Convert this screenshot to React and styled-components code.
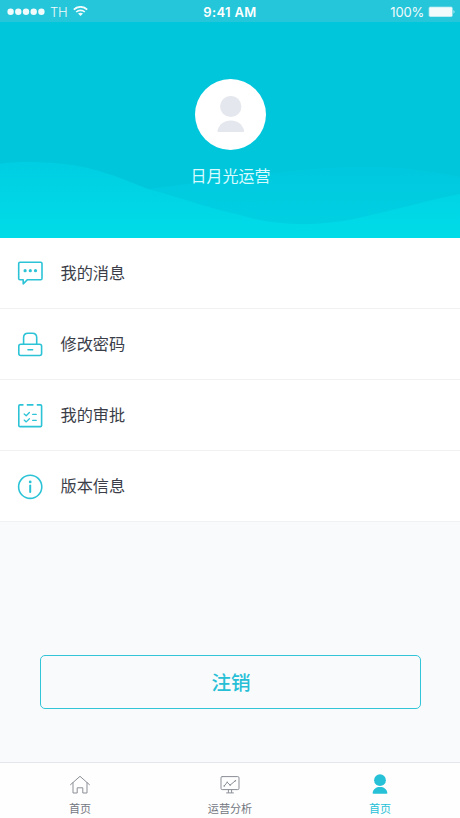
import React from 'react';
import styled, { createGlobalStyle } from 'styled-components';

const GlobalStyle = createGlobalStyle`
  * { box-sizing: border-box; }
  body {
    margin: 0;
    font-family: 'Noto Sans CJK SC', sans-serif;
    background: #f9fafc;
  }
`;

const Screen = styled.div`
  display: flex;
  flex-direction: column;
  width: 460px;
  height: 818px;
  overflow: hidden;
  background: #f9fafc;
`;

const StatusBar = styled.div`
  display: grid;
  grid-template-columns: 1fr auto 1fr;
  align-items: start;
  flex: none;
  height: 22px;
  padding: 2px 5px 0 7px;
  background: #26c6da;
  color: #fff;
  font: 13px/20px Inter, sans-serif;
`;

const StatusSide = styled.div`
  display: flex;
  align-items: center;
  justify-content: ${(p) => (p.$end ? 'flex-end' : 'flex-start')};
  height: 20px;
  gap: ${(p) => (p.$end ? '4px' : '5px')};
  opacity: 0.94;
`;

const Carrier = styled.span`
  font-weight: 300;
  letter-spacing: -0.2px;
`;

const Percent = styled.span`
  letter-spacing: -0.2px;
`;

const Clock = styled.span`
  font-size: 13px;
  font-weight: 600;
  letter-spacing: 0.35px;
  margin-right: 2px;
`;

const Profile = styled.header`
  display: grid;
  flex: none;
  height: 216px;
  background: #00c6dc;
`;

const Waves = styled.svg`
  grid-area: 1 / 1;
  display: block;
`;

const ProfileContent = styled.div`
  grid-area: 1 / 1;
  z-index: 1;
  display: flex;
  flex-direction: column;
  align-items: center;
  padding: 57px 0 0 1px;
`;

const Avatar = styled.div`
  display: flex;
  width: 71px;
  height: 71px;
  border-radius: 50%;
  background: #fff;
`;

const UserName = styled.div`
  margin-top: 13px;
  color: #d9fbff;
  font-size: 16px;
  line-height: 24px;
`;

const Menu = styled.nav`
  flex: none;
  background: #fff;
`;

const MenuRow = styled.a`
  display: flex;
  align-items: center;
  height: 71px;
  padding-left: 16px;
  gap: 16.5px;
  border-bottom: 1px solid #f0f1f3;
  color: #3b3e49;
  font-size: 16.2px;
  line-height: 24px;

  svg { flex: none; }
`;

const MenuLabel = styled.span`
  padding-bottom: 2px;
`;

const Actions = styled.div`
  display: flex;
  flex: 1;
  align-items: flex-start;
  padding: 133px 39px 0 40px;
`;

const LogoutButton = styled.button`
  flex: 1;
  height: 54px;
  padding: 0 0 1px 1px;
  border: 1.4px solid #32c5d7;
  border-radius: 5px;
  background: transparent;
  color: #26bfd6;
  font: 500 19.6px/28px 'Noto Sans CJK SC', sans-serif;
`;

const TabBar = styled.nav`
  display: grid;
  grid-template-columns: 160px 140px 160px;
  flex: none;
  height: 56px;
  border-top: 1px solid #e3e7ec;
  background: #fefefe;
`;

const Tab = styled.a`
  display: flex;
  flex-direction: column;
  align-items: center;
  padding-top: 11px;
  color: ${(p) => (p.$active ? '#26c1d7' : '#73777e')};
  font-size: 11.1px;
  line-height: 16px;

  svg { margin-bottom: 4px; }
`;

const lineProps = {
  fill: 'none',
  stroke: '#2cc3d7',
  strokeWidth: 1.6,
  strokeLinejoin: 'round',
  strokeLinecap: 'round',
};

const MessageIcon = () => (
  <svg width="28" height="28" viewBox="0 0 28 28" {...lineProps}>
    <path d="M4 3.2H24.7Q26 3.2 26 4.5V19.4Q26 20.7 24.7 20.7H11.5L7.2 24.8V20.7H4Q2.7 20.7 2.7 19.4V4.5Q2.7 3.2 4 3.2Z" />
    <g fill="#2cc3d7" stroke="none">
      <circle cx="9.1" cy="11.7" r="1.6" />
      <circle cx="14.3" cy="11.7" r="1.6" />
      <circle cx="19.5" cy="11.7" r="1.6" />
    </g>
  </svg>
);

const LockIcon = () => (
  <svg width="28" height="28" viewBox="0 0 28 28" {...lineProps}>
    <g transform="translate(0 .6)">
      <path d="M7.6 13.6V7Q7.6 2.6 12 2.6H16.3Q20.7 2.6 20.7 7V13.6" />
      <rect x="2.8" y="13.7" width="22.8" height="11.2" rx="2" />
      <path d="M12 19.2H16.6" />
    </g>
  </svg>
);

const ApprovalIcon = () => (
  <svg width="28" height="28" viewBox="0 0 28 28" {...lineProps}>
    <g transform="translate(0 .7)">
      <path d="M6.9 3.2H4Q2.8 3.2 2.8 4.4V23.7Q2.8 24.9 4 24.9H24.4Q25.6 24.9 25.6 23.7V4.4Q25.6 3.2 24.4 3.2H21.4M11.4 3.2H16.9" />
      <path strokeWidth="1.3" d="M8.2 12.2L10.2 14L13.4 10.8M8.2 18.4L10.2 20.2L13.4 17M16.7 12.7H20.2M16.7 18.7H20.2" />
    </g>
  </svg>
);

const InfoIcon = () => (
  <svg width="28" height="28" viewBox="0 0 28 28" {...lineProps}>
    <circle cx="14.2" cy="14.8" r="11.6" />
    <path d="M14.2 13.6V20.1" strokeWidth="2" />
    <circle cx="14.2" cy="9.9" r="1.4" fill="#2cc3d7" stroke="none" />
  </svg>
);

const HomeIcon = () => (
  <svg width="22" height="22" viewBox="0 0 22 22" fill="none" stroke="#8b8f96" strokeWidth="1">
    <path d="M1.5 10.7L11 2.3L20.5 10.7M4 8.7V19H8.2V13.8H13.8V19H18V8.7" strokeLinecap="round" strokeLinejoin="round" />
  </svg>
);

const AnalysisIcon = () => (
  <svg width="22" height="22" viewBox="0 0 22 22" fill="none" stroke="#8b8f96" strokeWidth="1" strokeLinecap="round">
    <rect x="2" y="2.6" width="18" height="13" rx="1.2" />
    <path d="M5.3 11.9L8.2 8.3L11.1 11.1L16.2 6.9M9.4 15.8V18.5M12.6 15.8V18.5M7.6 18.9H14.4" />
    <g fill="#8b8f96" stroke="none">
      <circle cx="5.3" cy="11.9" r=".8" />
      <circle cx="8.2" cy="8.3" r=".8" />
      <circle cx="11.1" cy="11.1" r=".8" />
      <circle cx="16.4" cy="6.8" r=".8" />
    </g>
  </svg>
);

const ProfileIcon = () => (
  <svg width="22" height="22" viewBox="0 0 22 22" fill="#26c1d7">
    <circle cx="11" cy="6.2" r="5.9" />
    <path d="M3.6 19C4.5 15 7.1 13.1 11 13.1S17.5 15 18.4 19Q18.4 19.8 17.5 19.8H4.5Q3.6 19.8 3.6 19Z" />
  </svg>
);

const SignalDots = () => (
  <svg width="38" height="8" viewBox="0 0 38 8" fill="#fff">
    {[3.6, 11.3, 19, 26.7, 34.4].map((x) => (
      <circle key={x} cx={x} cy="3.8" r="3.2" />
    ))}
  </svg>
);

const WifiIcon = () => (
  <svg width="15" height="12" viewBox="0 0 15 12" fill="none" stroke="#fff" strokeWidth="1.7">
    <path d="M.8 3.6C4.5 -.1 10.5 -.1 14.2 3.6M3.2 6C5.6 3.7 9.4 3.7 11.8 6" />
    <path d="M5 7.6Q7.5 5.7 10 7.6L7.5 10.1Z" fill="#fff" stroke="none" />
  </svg>
);

const BatteryIcon = () => (
  <svg width="27" height="12" viewBox="0 0 27 12" fill="#fff">
    <rect x=".5" y=".6" width="24.4" height="10.4" rx="1.8" opacity=".45" />
    <rect x="1.3" y="1.2" width="22.8" height="9.2" rx="1" />
    <path d="M25.6 3.8Q27.2 5.8 25.6 7.8Z" />
  </svg>
);

const menuItems = [
  ['我的消息', MessageIcon],
  ['修改密码', LockIcon],
  ['我的审批', ApprovalIcon],
  ['版本信息', InfoIcon],
];

const tabs = [
  ['首页', HomeIcon, false],
  ['运营分析', AnalysisIcon, false],
  ['首页', ProfileIcon, true],
];

export default function App() {
  return (
    <>
      <GlobalStyle />
      <Screen>
        <StatusBar>
          <StatusSide>
            <SignalDots />
            <Carrier>TH</Carrier>
            <WifiIcon />
          </StatusSide>
          <Clock>9:41 AM</Clock>
          <StatusSide $end>
            <Percent>100%</Percent>
            <BatteryIcon />
          </StatusSide>
        </StatusBar>
        <Profile>
          <Waves width="460" height="216" viewBox="0 0 460 216">
            <defs>
              <linearGradient id="back" gradientUnits="userSpaceOnUse" x1="0" y1="142" x2="0" y2="216">
                <stop offset="0" stopColor="#00c8de" />
                <stop offset="1" stopColor="#00d1e3" />
              </linearGradient>
              <linearGradient id="front" gradientUnits="userSpaceOnUse" x1="0" y1="140" x2="0" y2="216">
                <stop offset="0" stopColor="#00cee2" />
                <stop offset="1" stopColor="#00dce8" />
              </linearGradient>
            </defs>
            <path fill="url(#back)" d="M140 168C230 157 300 145 365 145C402 145 430 149 460 155V216H140Z" />
            <path fill="url(#front)" d="M0 142C15 139 36 140 54 141C95 144 117 155 148 167C185 177 211 187 240 193C275 204 310 204 343 199C382 192 415 181 460 172V216H0Z" />
          </Waves>
          <ProfileContent>
            <Avatar>
              <svg width="71" height="71" viewBox="0 0 71 71" fill="#e4e7ed">
                <circle cx="35.8" cy="27.5" r="10.6" />
                <path d="M22.3 52C24.3 45 29 41.5 35.8 41.5S47.3 45 49.3 52Q49.3 53 47.8 53H23.8Q22.3 53 22.3 52Z" />
              </svg>
            </Avatar>
            <UserName>日月光运营</UserName>
          </ProfileContent>
        </Profile>
        <Menu>
          {menuItems.map(([label, Icon]) => (
            <MenuRow key={label}>
              <Icon />
              <MenuLabel>{label}</MenuLabel>
            </MenuRow>
          ))}
        </Menu>
        <Actions>
          <LogoutButton>注销</LogoutButton>
        </Actions>
        <TabBar>
          {tabs.map(([label, Icon, active], i) => (
            <Tab key={i} $active={active}>
              <Icon />
              {label}
            </Tab>
          ))}
        </TabBar>
      </Screen>
    </>
  );
}
